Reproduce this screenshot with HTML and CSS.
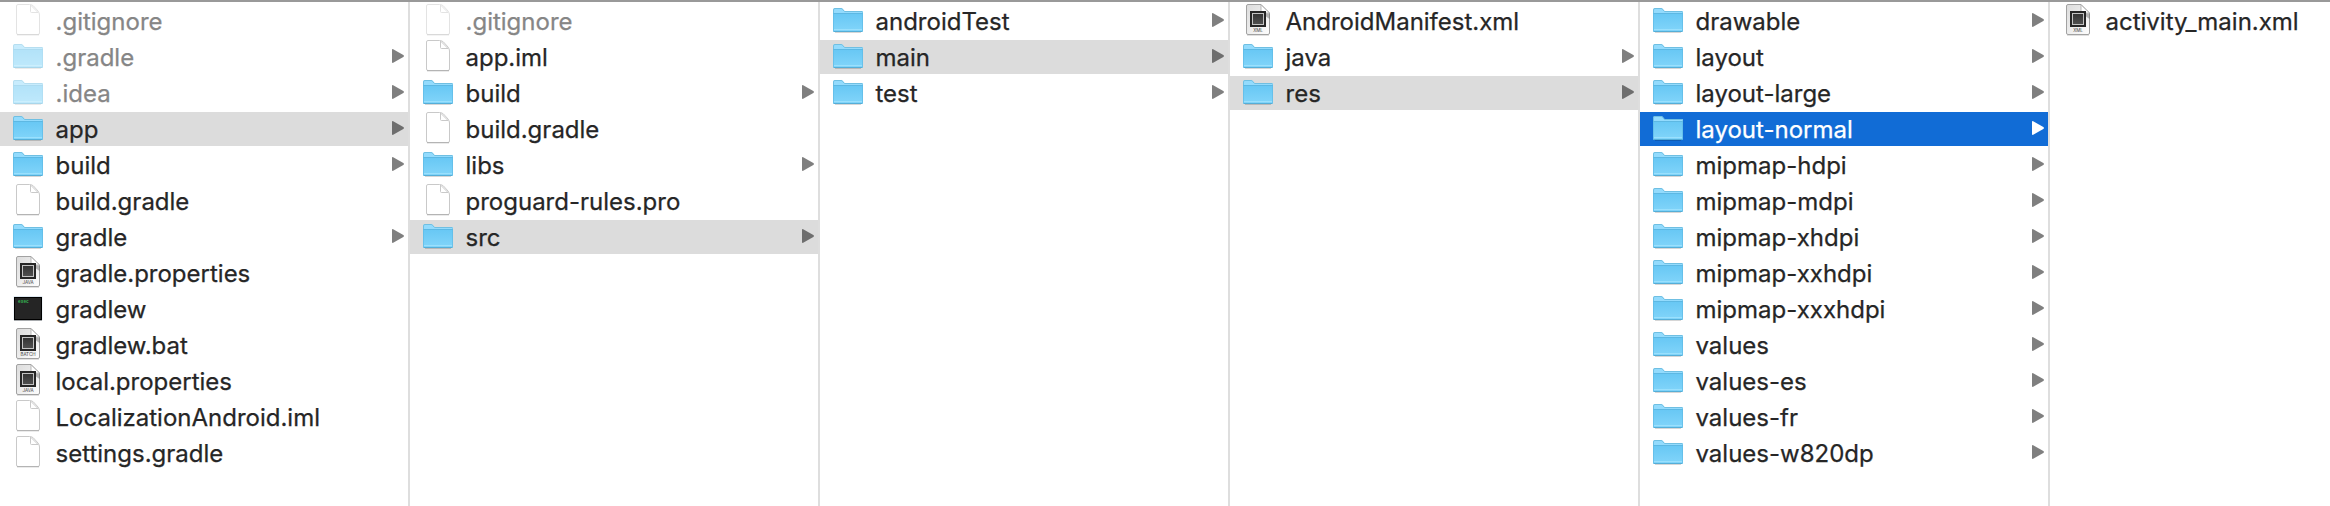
FILE: index.html
```html
<!DOCTYPE html>
<html lang="en">
<head>
<meta charset="utf-8">
<title>Files</title>
<link rel="stylesheet" href="styles.css">
</head>
<body>
<svg class="defs" aria-hidden="true">
  <defs>
    <linearGradient id="front" x1="0" y1="0" x2="0" y2="1"><stop offset="0" stop-color="#67c7f4"/><stop offset="1" stop-color="#82d5fa"/></linearGradient>
    <linearGradient id="paper" x1="0" y1="0" x2="1" y2="1"><stop offset="0" stop-color="#dcdcdc"/><stop offset="1" stop-color="#fdfdfd"/></linearGradient>
    <linearGradient id="chip" x1="0" y1="0" x2="0" y2="1"><stop offset="0" stop-color="#333"/><stop offset="1" stop-color="#505050"/></linearGradient>
    <symbol id="folder" viewBox="0 0 34 34">
      <path d="M4 28.500h26" stroke="#000" stroke-opacity=".16"/>
      <path d="M2 27V6q0-2 2-2h6q1.200 0 2 1l1.500 2H31q1 0 1 1v19z" fill="#93dbfd"/>
      <path d="M2.500 27V5.800q0-1.300 1.500-1.300h6q1 0 1.700.9l1.800 2.100H31q.5 0 .5 1" fill="none" stroke="#6fbfe2"/>
      <path d="M2 9h30v17.500q0 1.500-1.500 1.500h-27Q2 28 2 26.500z" fill="url(#front)"/>
      <path d="M2 9.500h30" stroke="#5db8e3"/>
      <path d="M2.500 9v18M31.500 9v18" stroke="#5fbbe5" stroke-opacity=".7"/>
      <path d="M3 25.500h28" stroke="#9ae0fd"/>
      <path d="M2.500 27.500h29" stroke="#55aed7"/>
    </symbol>
    <symbol id="file" viewBox="0 0 34 34">
      <path d="M6 31.500h22" stroke="#000" stroke-opacity=".08"/>
      <path d="M5.500 2q0-1.500 1.500-1.500h11.500Q21 .5 22.500 2L27 7q1.500 2 1.500 4v18q0 1.500-1.500 1.500H7Q5.500 30.500 5.500 29z" fill="#fff" stroke="#c9c9c9"/>
      <path d="M6 30.500h22" stroke="#b4b4b4"/>
      <path d="M19.500 1v6.500q0 1 1 1h6.500z" fill="#fff" stroke="#c9c9c9"/>
    </symbol>
    <symbol id="code" viewBox="0 0 34 34">
      <path d="M6 31.500h22" stroke="#000" stroke-opacity=".12"/>
      <path d="M5.500 2q0-1.500 1.500-1.500h13L28.500 9v20q0 1.500-1.500 1.500H7Q5.500 30.500 5.500 29z" fill="url(#paper)" stroke="#a2a2a2"/>
      <path d="M20 9l8.500.5V15z" fill="#000" fill-opacity=".25"/>
      <path d="M20 .8V8q0 1 1 1h7.500z" fill="#fff" stroke="#a8a8a8" stroke-width=".8"/>
      <rect x="9" y="7" width="16" height="16" fill="#262626"/>
      <rect x="11.500" y="9.500" width="11" height="11" fill="url(#chip)" stroke="#c4c4c4"/>
    </symbol>
    <symbol id="exec" viewBox="0 0 34 34">
      <rect x="2.500" y="4" width="29" height="24.500" rx="1" fill="#b8cfe0" fill-opacity=".45"/>
      <path d="M3 28.500h28" stroke="#000" stroke-opacity=".3"/>
      <rect x="3.500" y="5.500" width="27" height="22" fill="#252525" stroke="#000"/>
    </symbol>
    <symbol id="arrow" viewBox="0 0 12 14"><path d="M0 .9Q0-.3 1.200.3L11.300 6q1.300 1 0 2L1.200 13.700Q0 14.300 0 13.100z" fill="currentColor"/></symbol>
  </defs>
</svg>
<main class="browser">
  <ul class="column">
    <li class="row dim"><svg class="icon"><use href="#file"/></svg><span class="name">.gitignore</span></li>
    <li class="row dim"><svg class="icon"><use href="#folder"/></svg><span class="name">.gradle</span><svg class="arrow"><use href="#arrow"/></svg></li>
    <li class="row dim"><svg class="icon"><use href="#folder"/></svg><span class="name">.idea</span><svg class="arrow"><use href="#arrow"/></svg></li>
    <li class="row open"><svg class="icon"><use href="#folder"/></svg><span class="name">app</span><svg class="arrow"><use href="#arrow"/></svg></li>
    <li class="row"><svg class="icon"><use href="#folder"/></svg><span class="name">build</span><svg class="arrow"><use href="#arrow"/></svg></li>
    <li class="row"><svg class="icon"><use href="#file"/></svg><span class="name">build.gradle</span></li>
    <li class="row"><svg class="icon"><use href="#folder"/></svg><span class="name">gradle</span><svg class="arrow"><use href="#arrow"/></svg></li>
    <li class="row"><svg class="icon"><use href="#code"/><text class="kind" x="17" y="28">JAVA</text></svg><span class="name">gradle.properties</span></li>
    <li class="row"><svg class="icon"><use href="#exec"/><text class="prompt" x="7" y="11">exec</text></svg><span class="name">gradlew</span></li>
    <li class="row"><svg class="icon"><use href="#code"/><text class="kind" x="17" y="28">BATCH</text></svg><span class="name">gradlew.bat</span></li>
    <li class="row"><svg class="icon"><use href="#code"/><text class="kind" x="17" y="28">JAVA</text></svg><span class="name">local.properties</span></li>
    <li class="row"><svg class="icon"><use href="#file"/></svg><span class="name">LocalizationAndroid.iml</span></li>
    <li class="row"><svg class="icon"><use href="#file"/></svg><span class="name">settings.gradle</span></li>
  </ul>
  <ul class="column">
    <li class="row dim"><svg class="icon"><use href="#file"/></svg><span class="name">.gitignore</span></li>
    <li class="row"><svg class="icon"><use href="#file"/></svg><span class="name">app.iml</span></li>
    <li class="row"><svg class="icon"><use href="#folder"/></svg><span class="name">build</span><svg class="arrow"><use href="#arrow"/></svg></li>
    <li class="row"><svg class="icon"><use href="#file"/></svg><span class="name">build.gradle</span></li>
    <li class="row"><svg class="icon"><use href="#folder"/></svg><span class="name">libs</span><svg class="arrow"><use href="#arrow"/></svg></li>
    <li class="row"><svg class="icon"><use href="#file"/></svg><span class="name">proguard-rules.pro</span></li>
    <li class="row open"><svg class="icon"><use href="#folder"/></svg><span class="name">src</span><svg class="arrow"><use href="#arrow"/></svg></li>
  </ul>
  <ul class="column">
    <li class="row"><svg class="icon"><use href="#folder"/></svg><span class="name">androidTest</span><svg class="arrow"><use href="#arrow"/></svg></li>
    <li class="row open"><svg class="icon"><use href="#folder"/></svg><span class="name">main</span><svg class="arrow"><use href="#arrow"/></svg></li>
    <li class="row"><svg class="icon"><use href="#folder"/></svg><span class="name">test</span><svg class="arrow"><use href="#arrow"/></svg></li>
  </ul>
  <ul class="column">
    <li class="row"><svg class="icon"><use href="#code"/><text class="kind" x="17" y="28">XML</text></svg><span class="name">AndroidManifest.xml</span></li>
    <li class="row"><svg class="icon"><use href="#folder"/></svg><span class="name">java</span><svg class="arrow"><use href="#arrow"/></svg></li>
    <li class="row open"><svg class="icon"><use href="#folder"/></svg><span class="name">res</span><svg class="arrow"><use href="#arrow"/></svg></li>
  </ul>
  <ul class="column">
    <li class="row"><svg class="icon"><use href="#folder"/></svg><span class="name">drawable</span><svg class="arrow"><use href="#arrow"/></svg></li>
    <li class="row"><svg class="icon"><use href="#folder"/></svg><span class="name">layout</span><svg class="arrow"><use href="#arrow"/></svg></li>
    <li class="row"><svg class="icon"><use href="#folder"/></svg><span class="name">layout-large</span><svg class="arrow"><use href="#arrow"/></svg></li>
    <li class="row selected"><svg class="icon"><use href="#folder"/></svg><span class="name">layout-normal</span><svg class="arrow"><use href="#arrow"/></svg></li>
    <li class="row"><svg class="icon"><use href="#folder"/></svg><span class="name">mipmap-hdpi</span><svg class="arrow"><use href="#arrow"/></svg></li>
    <li class="row"><svg class="icon"><use href="#folder"/></svg><span class="name">mipmap-mdpi</span><svg class="arrow"><use href="#arrow"/></svg></li>
    <li class="row"><svg class="icon"><use href="#folder"/></svg><span class="name">mipmap-xhdpi</span><svg class="arrow"><use href="#arrow"/></svg></li>
    <li class="row"><svg class="icon"><use href="#folder"/></svg><span class="name">mipmap-xxhdpi</span><svg class="arrow"><use href="#arrow"/></svg></li>
    <li class="row"><svg class="icon"><use href="#folder"/></svg><span class="name">mipmap-xxxhdpi</span><svg class="arrow"><use href="#arrow"/></svg></li>
    <li class="row"><svg class="icon"><use href="#folder"/></svg><span class="name">values</span><svg class="arrow"><use href="#arrow"/></svg></li>
    <li class="row"><svg class="icon"><use href="#folder"/></svg><span class="name">values-es</span><svg class="arrow"><use href="#arrow"/></svg></li>
    <li class="row"><svg class="icon"><use href="#folder"/></svg><span class="name">values-fr</span><svg class="arrow"><use href="#arrow"/></svg></li>
    <li class="row"><svg class="icon"><use href="#folder"/></svg><span class="name">values-w820dp</span><svg class="arrow"><use href="#arrow"/></svg></li>
  </ul>
  <ul class="column">
    <li class="row"><svg class="icon"><use href="#code"/><text class="kind" x="17" y="28">XML</text></svg><span class="name">activity_main.xml</span></li>
  </ul>
</main>
</body>
</html>
```
FILE: styles.css
```css
body {
  margin: 0;
  background: #fff;
  color: #262626;
  font-family: Inter, "Liberation Sans", sans-serif;
  font-size: 24px;
}
.defs {
  display: block;
  width: 0;
  height: 0;
}
.browser {
  display: flex;
  box-sizing: border-box;
  width: 100vw;
  height: 506px;
  overflow: hidden;
  border-top: 2px solid #999;
}
.column {
  display: flex;
  flex: 0 0 408px;
  flex-direction: column;
  gap: 2px;
  margin: 0;
  padding: 2px 0 0;
  list-style: none;
  border-right: 2px solid #dedede;
}
.column:last-child {
  flex: 1;
  border-right: 0;
}
.row {
  display: flex;
  align-items: center;
  height: 34px;
  padding: 0 4px 0 11px;
}
.icon {
  flex: none;
  width: 34px;
  height: 34px;
}
.name {
  flex: 1;
  padding: 2px 0 0 10.5px;
  line-height: 34px;
  white-space: nowrap;
  -webkit-text-stroke: .25px currentColor;
}
.arrow {
  flex: none;
  width: 12px;
  height: 14px;
  margin-bottom: 2px;
  color: #7f7f7f;
}
.kind {
  fill: #444;
  font-size: 4.5px;
  text-anchor: middle;
}
.prompt {
  fill: #35b552;
  font-family: "Liberation Mono", monospace;
  font-size: 4.5px;
  font-weight: bold;
}
.dim .icon {
  opacity: .5;
}
.dim .name {
  color: #868686;
}
.open {
  background: #dcdcdc;
}
.open .arrow {
  color: #6e6e6e;
}
.selected {
  background: #116cd6;
}
.selected .name,
.selected .arrow {
  color: #fff;
}
```
